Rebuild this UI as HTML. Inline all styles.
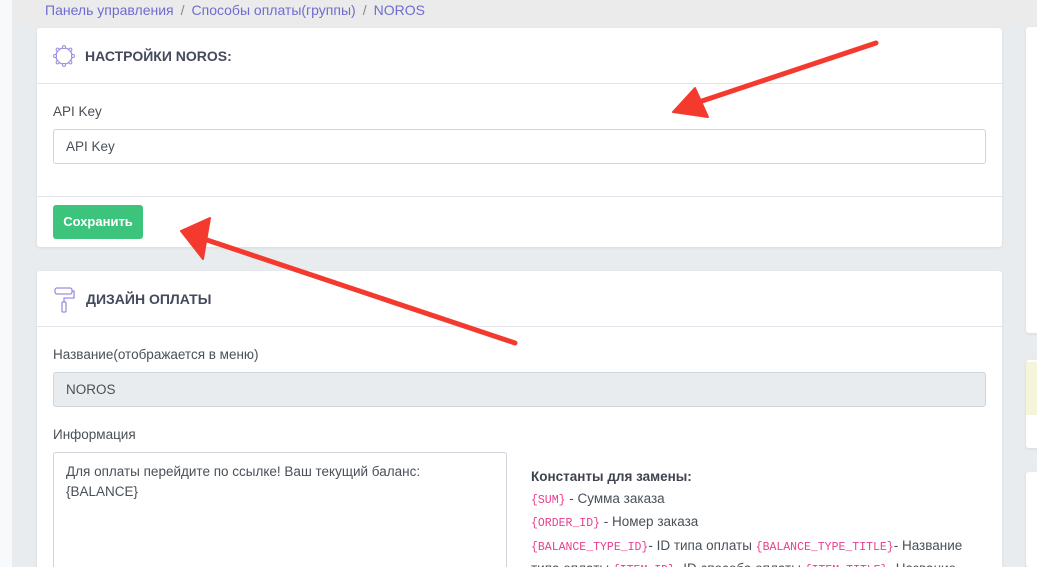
<!DOCTYPE html>
<html style="overflow:hidden;height:567px"><head><meta charset="utf-8"><style>
*{box-sizing:border-box;margin:0;padding:0}
body{width:1037px;height:567px;overflow:hidden;background:#e9ecef;font-family:"Liberation Sans","DejaVu Sans",sans-serif;color:#495057;position:relative;font-size:14px}
.left{position:absolute;left:0;top:0;width:12px;height:567px;background:#f8f9fa}
.top{position:absolute;left:12px;top:0;width:1025px;height:27px;background:#ebebeb}
.bc{position:absolute;left:45px;top:2px;font-size:14px;color:#6f6cd0}
.bc span{color:#888;margin:0 7px}
.card{position:absolute;background:#fff;border-radius:3px;box-shadow:0 1px 3px rgba(0,0,0,.08);overflow:hidden}
.hd{height:56px;border-bottom:1px solid #e3e3ec;display:flex;align-items:center;padding-left:15px;font-weight:bold;font-size:14px;color:#444a5c}
.lbl{position:absolute;left:16px;font-size:13.5px;color:#495057}
.inp{position:absolute;left:16px;right:16px;height:35px;border:1px solid #ced4da;border-radius:3px;padding:9px 12px;font-size:13.5px}
code{font-family:"Liberation Mono",monospace;font-size:11.5px;color:#e83e8c}
</style></head><body>
<div class="left"></div><div class="top"></div>
<div class="bc">Панель управления<span>/</span>Способы оплаты(группы)<span>/</span>NOROS</div>

<div class="card" style="left:37px;top:28px;width:965px;height:219px">
 <div class="hd"><svg width="24" height="24" viewBox="0 0 24 24" style="margin-right:9px"><circle cx="12" cy="12" r="8" fill="none" stroke="#9a8fe0" stroke-width="1.3"/><g fill="#fff" stroke="#9a8fe0" stroke-width="1"><circle cx="12" cy="3" r="1.5"/><circle cx="12" cy="21" r="1.5"/><circle cx="3" cy="12" r="1.5"/><circle cx="21" cy="12" r="1.5"/><circle cx="5.6" cy="5.6" r="1.5"/><circle cx="18.4" cy="18.4" r="1.5"/><circle cx="5.6" cy="18.4" r="1.5"/><circle cx="18.4" cy="5.6" r="1.5"/></g></svg>НАСТРОЙКИ NOROS:</div>
 <div class="lbl" style="top:76px">API Key</div>
 <div class="inp" style="top:101px">API Key</div>
 <div style="position:absolute;left:0;right:0;top:168px;border-top:1px solid #e3e3ec"></div>
 <div style="position:absolute;left:16px;top:177px;width:90px;height:34px;background:#3cc47c;border-radius:3px;color:#fff;font-weight:bold;font-size:13px;text-align:center;line-height:34px">Сохранить</div>
</div>

<div class="card" style="left:37px;top:271px;width:965px;height:296px;border-radius:3px 3px 0 0">
 <div class="hd"><svg width="24" height="30" viewBox="0 0 24 30" style="margin-right:10px"><rect x="3" y="4" width="17" height="6" rx="2" fill="none" stroke="#9a8fe0" stroke-width="1.3"/><path d="M20 7h2v7h-10v4" fill="none" stroke="#9a8fe0" stroke-width="1.3"/><rect x="10" y="18" width="4" height="10" rx="1" fill="none" stroke="#9a8fe0" stroke-width="1.3"/></svg>ДИЗАЙН ОПЛАТЫ</div>
 <div class="lbl" style="top:76px">Название(отображается в меню)</div>
 <div class="inp" style="top:101px;background:#e9ecef">NOROS</div>
 <div class="lbl" style="top:156px">Информация</div>
 <div style="position:absolute;left:16px;top:181px;width:454px;height:130px;border:1px solid #ced4da;border-radius:3px;padding:9px 12px;font-size:13.5px;line-height:20px">Для оплаты перейдите по ссылке! Ваш текущий баланс:<br>{BALANCE}</div>
 <div style="position:absolute;left:494px;top:195px;width:440px;font-size:13.5px;line-height:21.5px;color:#495057"><b style="color:#3f4350">Константы для замены:</b><br><code>{SUM}</code> - Сумма заказа<br><code>{ORDER_ID}</code> - Номер заказа<br><code>{BALANCE_TYPE_ID}</code>- ID типа оплаты <code>{BALANCE_TYPE_TITLE}</code>- Название типа оплаты <code>{ITEM_ID}</code>- ID способа оплаты <code>{ITEM_TITLE}</code>- Название</div>
</div>

<div class="card" style="left:1026px;top:27px;width:20px;height:306px"></div>
<div class="card" style="left:1026px;top:360px;width:20px;height:88px"><div style="height:53px;background:#f5f5dc;margin-top:2px"></div></div>
<div class="card" style="left:1026px;top:472px;width:20px;height:95px"></div>

<svg width="1037" height="567" style="position:absolute;left:0;top:0">
<g fill="#f43a2f" stroke="#f43a2f" stroke-linejoin="round" stroke-linecap="round">
<line x1="876" y1="43" x2="690" y2="105" stroke-width="5"/>
<polygon points="673,112 695,88 708,117" stroke-width="2"/>
<line x1="515" y1="343" x2="195" y2="236" stroke-width="5"/>
<polygon points="181,231 210,218 203,259" stroke-width="2"/>
</g></svg>
</body></html>
